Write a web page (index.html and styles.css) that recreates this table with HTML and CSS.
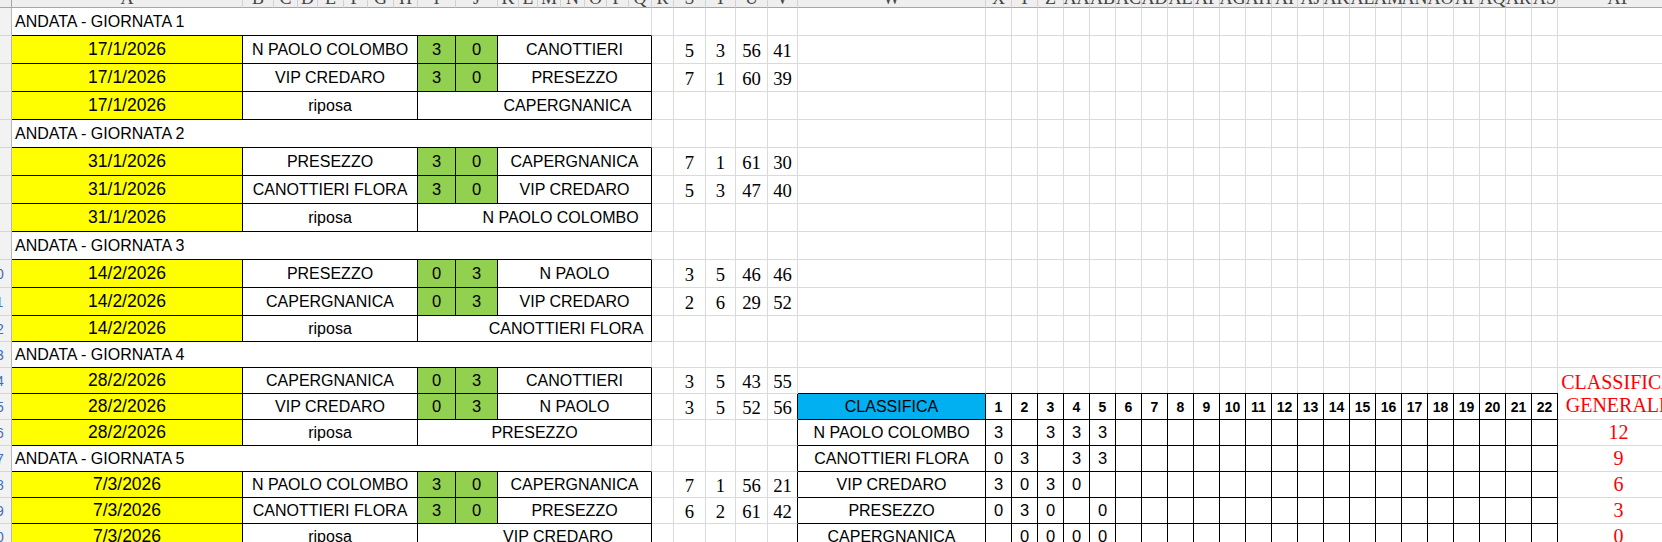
FILE: index.html
```html
<!DOCTYPE html>
<html lang="it">
<head>
<meta charset="utf-8">
<title>Calendario Andata</title>
<link rel="stylesheet" href="styles.css">
</head>
<body>
<div class="sheet">
  <!-- column headers -->
  <div class="hd corner"></div>
  <div class="hd"><span>A</span></div>
  <div class="hd"><span>B</span></div>
  <div class="hd"><span>C</span></div>
  <div class="hd"><span>D</span></div>
  <div class="hd"><span>E</span></div>
  <div class="hd"><span>F</span></div>
  <div class="hd"><span>G</span></div>
  <div class="hd"><span>H</span></div>
  <div class="hd"><span>I</span></div>
  <div class="hd"><span>J</span></div>
  <div class="hd"><span>K</span></div>
  <div class="hd"><span>L</span></div>
  <div class="hd"><span>M</span></div>
  <div class="hd"><span>N</span></div>
  <div class="hd"><span>O</span></div>
  <div class="hd"><span>P</span></div>
  <div class="hd"><span>Q</span></div>
  <div class="hd"><span>R</span></div>
  <div class="hd"><span>S</span></div>
  <div class="hd"><span>T</span></div>
  <div class="hd"><span>U</span></div>
  <div class="hd"><span>V</span></div>
  <div class="hd"><span>W</span></div>
  <div class="hd"><span>X</span></div>
  <div class="hd"><span>Y</span></div>
  <div class="hd"><span>Z</span></div>
  <div class="hd"><span>AA</span></div>
  <div class="hd"><span>AB</span></div>
  <div class="hd"><span>AC</span></div>
  <div class="hd"><span>AD</span></div>
  <div class="hd"><span>AE</span></div>
  <div class="hd"><span>AF</span></div>
  <div class="hd"><span>AG</span></div>
  <div class="hd"><span>AH</span></div>
  <div class="hd"><span>AI</span></div>
  <div class="hd"><span>AJ</span></div>
  <div class="hd"><span>AK</span></div>
  <div class="hd"><span>AL</span></div>
  <div class="hd"><span>AM</span></div>
  <div class="hd"><span>AN</span></div>
  <div class="hd"><span>AO</span></div>
  <div class="hd"><span>AP</span></div>
  <div class="hd"><span>AQ</span></div>
  <div class="hd"><span>AR</span></div>
  <div class="hd"><span>AS</span></div>
  <div class="hd"><span>AT</span></div>

  <!-- empty grid areas X..AS -->
  <div class="blk g28"></div>
  <div class="blk g26"></div>
  <div class="blk gedge"></div>
  <div class="blk gbox"></div>

  <!-- row 1 -->
  <div class="rh"><span>1</span></div>
  <div class="sec">ANDATA - GIORNATA 1</div>
  <div></div><div></div><div></div><div></div><div></div>
  <div></div>
  <div class="at"></div>

  <!-- row 2 -->
  <div class="rh"><span>2</span></div>
  <div class="date">17/1/2026</div>
  <div class="team">N PAOLO COLOMBO</div>
  <div class="sc">3</div><div class="sc">0</div>
  <div class="opp">CANOTTIERI</div>
  <div></div>
  <div class="n">5</div><div class="n">3</div><div class="n">56</div><div class="n">41</div>
  <div></div>
  <div class="at"></div>

  <!-- row 3 -->
  <div class="rh"><span>3</span></div>
  <div class="date">17/1/2026</div>
  <div class="team">VIP CREDARO</div>
  <div class="sc">3</div><div class="sc">0</div>
  <div class="opp">PRESEZZO</div>
  <div></div>
  <div class="n">7</div><div class="n">1</div><div class="n">60</div><div class="n">39</div>
  <div></div>
  <div class="at"></div>

  <!-- row 4 -->
  <div class="rh"><span>4</span></div>
  <div class="date">17/1/2026</div>
  <div class="team">riposa</div>
  <div class="rest shift-66">CAPERGNANICA</div>
  <div></div><div></div><div></div><div></div><div></div>
  <div></div>
  <div class="at"></div>

  <!-- row 5 -->
  <div class="rh"><span>5</span></div>
  <div class="sec">ANDATA - GIORNATA 2</div>
  <div></div><div></div><div></div><div></div><div></div>
  <div></div>
  <div class="at"></div>

  <!-- row 6 -->
  <div class="rh"><span>6</span></div>
  <div class="date">31/1/2026</div>
  <div class="team">PRESEZZO</div>
  <div class="sc">3</div><div class="sc">0</div>
  <div class="opp">CAPERGNANICA</div>
  <div></div>
  <div class="n">7</div><div class="n">1</div><div class="n">61</div><div class="n">30</div>
  <div></div>
  <div class="at"></div>

  <!-- row 7 -->
  <div class="rh"><span>7</span></div>
  <div class="date">31/1/2026</div>
  <div class="team">CANOTTIERI FLORA</div>
  <div class="sc">3</div><div class="sc">0</div>
  <div class="opp">VIP CREDARO</div>
  <div></div>
  <div class="n">5</div><div class="n">3</div><div class="n">47</div><div class="n">40</div>
  <div></div>
  <div class="at"></div>

  <!-- row 8 -->
  <div class="rh"><span>8</span></div>
  <div class="date">31/1/2026</div>
  <div class="team">riposa</div>
  <div class="rest shift-52">N PAOLO COLOMBO</div>
  <div></div><div></div><div></div><div></div><div></div>
  <div></div>
  <div class="at"></div>

  <!-- row 9 -->
  <div class="rh"><span>9</span></div>
  <div class="sec">ANDATA - GIORNATA 3</div>
  <div></div><div></div><div></div><div></div><div></div>
  <div></div>
  <div class="at"></div>

  <!-- row 10 -->
  <div class="rh"><span>10</span></div>
  <div class="date">14/2/2026</div>
  <div class="team">PRESEZZO</div>
  <div class="sc">0</div><div class="sc">3</div>
  <div class="opp">N PAOLO</div>
  <div></div>
  <div class="n">3</div><div class="n">5</div><div class="n">46</div><div class="n">46</div>
  <div></div>
  <div class="at"></div>

  <!-- row 11 -->
  <div class="rh"><span>11</span></div>
  <div class="date">14/2/2026</div>
  <div class="team">CAPERGNANICA</div>
  <div class="sc">0</div><div class="sc">3</div>
  <div class="opp">VIP CREDARO</div>
  <div></div>
  <div class="n">2</div><div class="n">6</div><div class="n">29</div><div class="n">52</div>
  <div></div>
  <div class="at"></div>

  <!-- row 12 -->
  <div class="rh"><span>12</span></div>
  <div class="date">14/2/2026</div>
  <div class="team">riposa</div>
  <div class="rest shift-63">CANOTTIERI FLORA</div>
  <div></div><div></div><div></div><div></div><div></div>
  <div></div>
  <div class="at"></div>

  <!-- row 13 -->
  <div class="rh"><span>13</span></div>
  <div class="sec">ANDATA - GIORNATA 4</div>
  <div></div><div></div><div></div><div></div><div></div>
  <div></div>
  <div class="at"></div>

  <!-- row 14 -->
  <div class="rh"><span>14</span></div>
  <div class="date">28/2/2026</div>
  <div class="team">CAPERGNANICA</div>
  <div class="sc">0</div><div class="sc">3</div>
  <div class="opp">CANOTTIERI</div>
  <div></div>
  <div class="n">3</div><div class="n">5</div><div class="n">43</div><div class="n">55</div>
  <div class="bb"></div>
  <div class="at red cg">CLASSIFICA<br>GENERALE</div>

  <!-- row 15 -->
  <div class="rh"><span>15</span></div>
  <div class="date">28/2/2026</div>
  <div class="team">VIP CREDARO</div>
  <div class="sc">0</div><div class="sc">3</div>
  <div class="opp">N PAOLO</div>
  <div></div>
  <div class="n">3</div><div class="n">5</div><div class="n">52</div><div class="n br">56</div>
  <div class="tb cls-h">CLASSIFICA</div>
  <div class="tb hn">1</div><div class="tb hn">2</div><div class="tb hn">3</div><div class="tb hn">4</div>
  <div class="tb hn">5</div><div class="tb hn">6</div><div class="tb hn">7</div><div class="tb hn">8</div>
  <div class="tb hn">9</div><div class="tb hn">10</div><div class="tb hn">11</div><div class="tb hn">12</div>
  <div class="tb hn">13</div><div class="tb hn">14</div><div class="tb hn">15</div><div class="tb hn">16</div>
  <div class="tb hn">17</div><div class="tb hn">18</div><div class="tb hn">19</div><div class="tb hn">20</div>
  <div class="tb hn">21</div><div class="tb hn">22</div>

  <!-- row 16 -->
  <div class="rh"><span>16</span></div>
  <div class="date">28/2/2026</div>
  <div class="team">riposa</div>
  <div class="rest">PRESEZZO</div>
  <div></div><div></div><div></div><div></div><div class="br"></div>
  <div class="tb">N PAOLO COLOMBO</div>
  <div class="tb v">3</div><div class="tb v"></div><div class="tb v">3</div><div class="tb v">3</div><div class="tb v">3</div>
  <div class="at red">12</div>

  <!-- row 17 -->
  <div class="rh"><span>17</span></div>
  <div class="sec">ANDATA - GIORNATA 5</div>
  <div></div><div></div><div></div><div></div><div class="br"></div>
  <div class="tb">CANOTTIERI FLORA</div>
  <div class="tb v">0</div><div class="tb v">3</div><div class="tb v"></div><div class="tb v">3</div><div class="tb v">3</div>
  <div class="at red">9</div>

  <!-- row 18 -->
  <div class="rh"><span>18</span></div>
  <div class="date">7/3/2026</div>
  <div class="team">N PAOLO COLOMBO</div>
  <div class="sc">3</div><div class="sc">0</div>
  <div class="opp">CAPERGNANICA</div>
  <div></div>
  <div class="n">7</div><div class="n">1</div><div class="n">56</div><div class="n br">21</div>
  <div class="tb">VIP CREDARO</div>
  <div class="tb v">3</div><div class="tb v">0</div><div class="tb v">3</div><div class="tb v">0</div><div class="tb v"></div>
  <div class="at red">6</div>

  <!-- row 19 -->
  <div class="rh"><span>19</span></div>
  <div class="date">7/3/2026</div>
  <div class="team">CANOTTIERI FLORA</div>
  <div class="sc">3</div><div class="sc">0</div>
  <div class="opp">PRESEZZO</div>
  <div></div>
  <div class="n">6</div><div class="n">2</div><div class="n">61</div><div class="n br">42</div>
  <div class="tb">PRESEZZO</div>
  <div class="tb v">0</div><div class="tb v">3</div><div class="tb v">0</div><div class="tb v"></div><div class="tb v">0</div>
  <div class="at red">3</div>

  <!-- row 20 -->
  <div class="rh"><span>20</span></div>
  <div class="date">7/3/2026</div>
  <div class="team">riposa</div>
  <div class="rest shift-47">VIP CREDARO</div>
  <div></div><div></div><div></div><div></div><div class="br"></div>
  <div class="tb">CAPERGNANICA</div>
  <div class="tb v"></div><div class="tb v">0</div><div class="tb v">0</div><div class="tb v">0</div><div class="tb v">0</div>
  <div class="at red">0</div>
</div>
</body>
</html>
```

FILE: styles.css
```css
* { box-sizing: border-box; }

html, body {
  margin: 0;
  padding: 0;
  background: #ffffff;
  overflow: hidden;
}

body {
  font-family: "Liberation Sans", Arial, sans-serif;
  font-size: 16px;
  color: #000000;
}

.sheet {
  display: grid;
  width: 1680px;
  grid-template-columns:
    12px 231px
    31px 24px 20px 26px 24px 26px 24px
    38px 42px
    21px 19px 23px 24px 22px 22px 23px
    22px 32px 30px 32px 30px
    188px repeat(22, 26px) 122px;
  grid-template-rows: 8px repeat(11, 28px) repeat(9, 26px);
}

.sheet > * {
  border-right: 1px solid #dadada;
  border-bottom: 1px solid #dadada;
  display: flex;
  align-items: center;
  justify-content: center;
  white-space: nowrap;
  min-width: 0;
}

/* column headers */
.hd {
  background: #efefef;
  border-right-color: #d2d2d2;
  border-bottom-color: #a6a6a6;
  align-items: flex-end;
  font-family: "Liberation Serif", "Times New Roman", serif;
  font-size: 18px;
  color: #444444;
}
.hd span { line-height: 18px; flex-shrink: 0; }
.corner { border-right-color: #a6a6a6; }

/* row headers */
.rh {
  background: #f2f2f2;
  border-right-color: #b8b8b8;
  border-bottom-color: #d6d6d6;
  justify-content: flex-end;
  overflow: hidden;
  font-size: 14px;
  color: #3d6fb4;
}
.rh span { flex: 0 0 30px; text-align: center; }

/* left schedule */
.sec {
  grid-column: span 17;
  justify-content: flex-start;
  padding-left: 3px;
  border-bottom-color: #000;
}

.date {
  background: #ffff00;
  border-right-color: #000;
  border-bottom-color: #000;
  font-size: 17.5px;
}

.team {
  grid-column: span 7;
  border-right-color: #000;
  border-bottom-color: #000;
}

.sc {
  background: #92d050;
  border-right-color: #000;
  border-bottom-color: #000;
  font-size: 16.5px;
}

.opp {
  grid-column: span 7;
  border-right-color: #000;
  border-bottom-color: #000;
}

.rest {
  grid-column: span 9;
  border-right-color: #000;
  border-bottom-color: #000;
}
.shift-66 { padding-left: 66px; }
.shift-63 { padding-left: 63px; }
.shift-52 { padding-left: 52px; }
.shift-47 { padding-left: 47px; }

.n {
  font-family: "Liberation Serif", "Times New Roman", serif;
  font-size: 18.67px;
  padding-top: 3px;
}

.br { border-right-color: #000; }
.bb { border-bottom-color: #000; }

/* standings */
.tb {
  border-right-color: #000;
  border-bottom-color: #000;
}
.cls-h { background: #00b0f0; }
.hn { font-weight: bold; font-size: 14px; }
.v { font-size: 16.5px; }

.at { grid-column: 47; }
.red {
  color: #ff0000;
  font-family: "Liberation Serif", "Times New Roman", serif;
  font-size: 20px;
}
.cg {
  grid-row: span 2;
  text-align: center;
  line-height: 23px;
}

/* empty gridline areas */
.blk { border: 0; }
.g28 {
  grid-column: 25 / 47;
  grid-row: 2 / 13;
  background-image:
    linear-gradient(90deg, transparent 25px, #dadada 25px),
    linear-gradient(180deg, transparent 27px, #dadada 27px);
  background-size: 26px 100%, 100% 28px;
}
.g26 {
  grid-column: 25 / 47;
  grid-row: 13 / 15;
  background-image:
    linear-gradient(90deg, transparent 25px, #dadada 25px),
    linear-gradient(180deg, transparent 25px, #dadada 25px);
  background-size: 26px 100%, 100% 26px;
}
.gedge {
  grid-column: 25 / 47;
  grid-row: 15 / 16;
  border-bottom: 1px solid #000;
  background-image: linear-gradient(90deg, transparent 25px, #dadada 25px);
  background-size: 26px 100%;
}
.gbox {
  grid-column: 30 / 47;
  grid-row: 17 / 22;
  background-image:
    linear-gradient(90deg, transparent 25px, #000 25px),
    linear-gradient(180deg, transparent 25px, #000 25px);
  background-size: 26px 100%, 100% 26px;
}
```
